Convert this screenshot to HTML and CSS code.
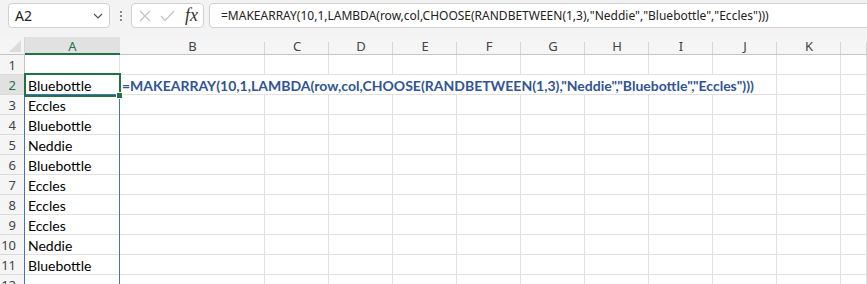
FILE: index.html
```html
<!DOCTYPE html>
<html lang="en">
  <head>
    <meta charset="UTF-8" />
    <title>Book1 - Excel</title>
    <link rel="stylesheet" href="styles.css">
  </head>
  <body>
    <div class="toolbar">
      <div class="name-box">
        <span>A2</span>
        <svg width="10" height="6" viewBox="0 0 10 6"><polyline points="1,1 5,5 9,1" fill="none" stroke="#555" stroke-width="1.2"/></svg>
      </div>
      <div class="grip"><i></i><i></i><i></i></div>
      <div class="fx-box">
        <svg width="12" height="12" viewBox="0 0 12 12"><line x1="1" y1="1" x2="11" y2="11" stroke="#c4c4c4" stroke-width="1.2"/><line x1="11" y1="1" x2="1" y2="11" stroke="#c4c4c4" stroke-width="1.2"/></svg>
        <svg width="15" height="12" viewBox="0 0 15 12"><polyline points="1,6 5,10.5 14,1" fill="none" stroke="#c4c4c4" stroke-width="1.2"/></svg>
        <span class="fx">fx</span>
      </div>
      <div class="formula-box">=MAKEARRAY(10,1,LAMBDA(row,col,CHOOSE(RANDBETWEEN(1,3),"Neddie","Bluebottle","Eccles")))</div>
    </div>

    <div class="sheet">
      <div class="h corner"><svg width="12" height="12" viewBox="0 0 12 12"><polygon points="12,0 12,12 0,12" fill="#dcdcdc"/></svg></div>
      <div class="h col active">A</div>
      <div class="h col">B</div>
      <div class="h col">C</div>
      <div class="h col">D</div>
      <div class="h col">E</div>
      <div class="h col">F</div>
      <div class="h col">G</div>
      <div class="h col">H</div>
      <div class="h col">I</div>
      <div class="h col">J</div>
      <div class="h col">K</div>
      <div class="h col"></div>

      <div class="h row">1</div>
      <div class="c"></div><div class="c"></div><div class="c"></div><div class="c"></div><div class="c"></div><div class="c"></div><div class="c"></div><div class="c"></div><div class="c"></div><div class="c"></div><div class="c"></div><div class="c"></div>

      <div class="h row active">2</div>
      <div class="c">Bluebottle</div>
      <div class="c formula">=MAKEARRAY(10,1,LAMBDA(row,col,CHOOSE(RANDBETWEEN(1,3),"Neddie","Bluebottle","Eccles")))</div>
      <div class="c"></div><div class="c"></div>

      <div class="h row">3</div>
      <div class="c">Eccles</div>
      <div class="c"></div><div class="c"></div><div class="c"></div><div class="c"></div><div class="c"></div><div class="c"></div><div class="c"></div><div class="c"></div><div class="c"></div><div class="c"></div><div class="c"></div>

      <div class="h row">4</div>
      <div class="c">Bluebottle</div>
      <div class="c"></div><div class="c"></div><div class="c"></div><div class="c"></div><div class="c"></div><div class="c"></div><div class="c"></div><div class="c"></div><div class="c"></div><div class="c"></div><div class="c"></div>

      <div class="h row">5</div>
      <div class="c">Neddie</div>
      <div class="c"></div><div class="c"></div><div class="c"></div><div class="c"></div><div class="c"></div><div class="c"></div><div class="c"></div><div class="c"></div><div class="c"></div><div class="c"></div><div class="c"></div>

      <div class="h row">6</div>
      <div class="c">Bluebottle</div>
      <div class="c"></div><div class="c"></div><div class="c"></div><div class="c"></div><div class="c"></div><div class="c"></div><div class="c"></div><div class="c"></div><div class="c"></div><div class="c"></div><div class="c"></div>

      <div class="h row">7</div>
      <div class="c">Eccles</div>
      <div class="c"></div><div class="c"></div><div class="c"></div><div class="c"></div><div class="c"></div><div class="c"></div><div class="c"></div><div class="c"></div><div class="c"></div><div class="c"></div><div class="c"></div>

      <div class="h row">8</div>
      <div class="c">Eccles</div>
      <div class="c"></div><div class="c"></div><div class="c"></div><div class="c"></div><div class="c"></div><div class="c"></div><div class="c"></div><div class="c"></div><div class="c"></div><div class="c"></div><div class="c"></div>

      <div class="h row">9</div>
      <div class="c">Eccles</div>
      <div class="c"></div><div class="c"></div><div class="c"></div><div class="c"></div><div class="c"></div><div class="c"></div><div class="c"></div><div class="c"></div><div class="c"></div><div class="c"></div><div class="c"></div>

      <div class="h row">10</div>
      <div class="c">Neddie</div>
      <div class="c"></div><div class="c"></div><div class="c"></div><div class="c"></div><div class="c"></div><div class="c"></div><div class="c"></div><div class="c"></div><div class="c"></div><div class="c"></div><div class="c"></div>

      <div class="h row">11</div>
      <div class="c">Bluebottle</div>
      <div class="c"></div><div class="c"></div><div class="c"></div><div class="c"></div><div class="c"></div><div class="c"></div><div class="c"></div><div class="c"></div><div class="c"></div><div class="c"></div><div class="c"></div>

      <div class="h row">12</div>
      <div class="c"></div><div class="c"></div><div class="c"></div><div class="c"></div><div class="c"></div><div class="c"></div><div class="c"></div><div class="c"></div><div class="c"></div><div class="c"></div><div class="c"></div><div class="c"></div>

      <!-- spill range and active cell drawn over the grid -->
      <div class="spill"></div>
      <div class="selection"></div>
      <div class="fill-handle"></div>
    </div>
  </body>
</html>
```

FILE: styles.css
```css
body {
  margin: 0;
  height: 284px;
  overflow: hidden;
  background-color: #fff;
  font-family: "Noto Sans", sans-serif;
}

.toolbar {
  display: flex;
  align-items: flex-start;
  height: 37px;
  padding: 3px 0 0 8px;
  box-sizing: border-box;
  background-color: #f3f3f3;
  overflow: hidden;
}

.name-box,
.fx-box,
.formula-box {
  flex-shrink: 0;
  height: 25px;
  box-sizing: border-box;
  background-color: #fff;
  border: 1px solid #d1d1d1;
  border-radius: 4px;
  display: flex;
  align-items: center;
}

.name-box {
  width: 102px;
  padding: 0 6px 0 6px;
  justify-content: space-between;
  font-size: 14px;
  color: #222;
}

.grip {
  flex-shrink: 0;
  width: 21px;
  display: flex;
  flex-direction: column;
  align-items: center;
  gap: 2px;
  padding-top: 8px;
}

.grip i {
  width: 2px;
  height: 2px;
  background-color: #8a8a8a;
}

.fx-box {
  width: 73px;
  padding: 0 4px 0 7px;
  gap: 9px;
}

.fx {
  font-family: "Liberation Serif", serif;
  font-style: italic;
  font-size: 18px;
  color: #333;
  margin-left: 1px;
}

.formula-box {
  margin-left: 5px;
  width: 700px;
  padding-left: 11px;
  font-size: 12px;
  color: #222;
  white-space: nowrap;
}

.sheet {
  position: relative;
  display: grid;
  grid-template-columns: 25px 95px 145px repeat(9, 64px) 1fr;
  grid-template-rows: 18px;
  grid-auto-rows: 20px;
}

.c {
  box-sizing: border-box;
  border-right: 1px solid #e1e1e1;
  border-bottom: 1px solid #e1e1e1;
  padding-left: 3px;
  font-family: "Lato", sans-serif;
  font-size: 14px;
  line-height: 21px;
  color: #000;
  white-space: nowrap;
}

.c.formula {
  grid-column: 3 / 12;
  font-weight: bold;
  color: #305496;
  padding-left: 2px;
}

.h {
  box-sizing: border-box;
  background-color: #f5f5f5;
  font-family: "Noto Sans", sans-serif;
  font-size: 13px;
  color: #444;
}

.h.col {
  text-align: center;
  line-height: 18px;
  border-bottom: 1px solid #c4c4c4;
  background-image: linear-gradient(#d6d6d6, #d6d6d6);
  background-size: 1px 12px;
  background-position: right bottom;
  background-repeat: no-repeat;
}

.h.col.active {
  background-color: #e1e1e1;
  border-bottom: 2px solid #217346;
  color: #217346;
  background-image: none;
}

.h.corner {
  display: flex;
  align-items: flex-end;
  justify-content: flex-end;
  padding: 0 3px 2px 0;
  border-bottom: 1px solid #c4c4c4;
  border-right: 1px solid #d6d6d6;
}

.h.row {
  text-align: right;
  padding-right: 8px;
  line-height: 20px;
  border-right: 1px solid #c4c4c4;
  border-bottom: 1px solid #dadada;
}

.h.row.active {
  background-color: #e1e1e1;
  color: #217346;
}

.spill {
  position: absolute;
  left: 24px;
  top: 57px;
  width: 96px;
  height: 219px;
  box-sizing: border-box;
  border: 1px solid #4472c4;
}

.selection {
  position: absolute;
  left: 24px;
  top: 36px;
  width: 97px;
  height: 24px;
  box-sizing: border-box;
  border: 2px solid #217346;
}

.fill-handle {
  position: absolute;
  left: 116px;
  top: 55px;
  width: 5px;
  height: 5px;
  background-color: #217346;
  border: 1px solid #fff;
}
```
